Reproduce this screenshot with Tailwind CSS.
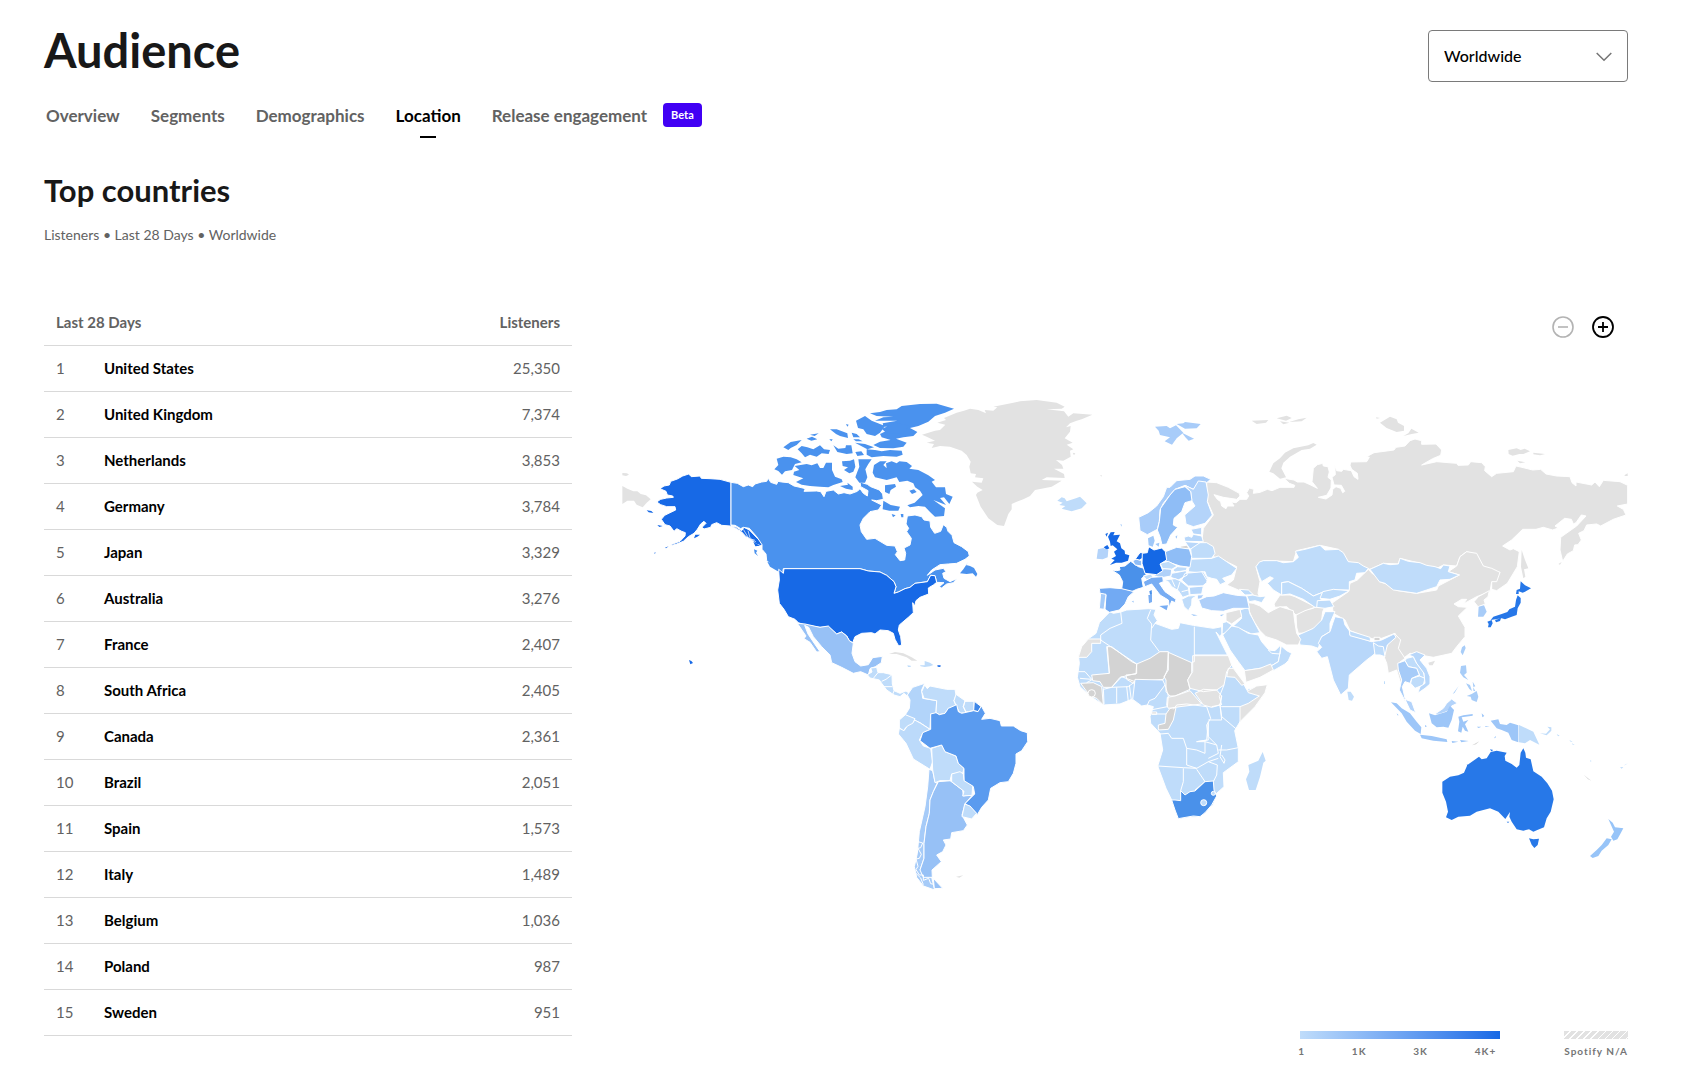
<!DOCTYPE html>
<html lang="en">
<head>
<meta charset="utf-8">
<meta name="viewport" content="width=device-width, initial-scale=1">
<title>Audience – Location</title>
<script src="https://cdn.jsdelivr.net/npm/@tailwindcss/browser@4"></script>
</head>
<body class="bg-white font-['Lato',sans-serif] text-black">
<main class="pl-11 pr-[73px] pb-5">
  <header class="flex items-start justify-between pt-6">
    <h1 class="text-[47px] leading-[52px] font-bold text-[#181818]">Audience</h1>
    <div class="relative mt-1.5 w-[200px]">
      <select aria-label="Region" class="h-[52px] w-full appearance-none rounded-[4px] border border-[#7a7a7a] bg-white px-[15px] text-[16px] font-medium text-black">
        <option>Worldwide</option>
      </select>
      <svg class="pointer-events-none absolute top-[22px] right-4 h-2.5 w-4" viewBox="0 0 16 10" fill="none" stroke="#757575" stroke-width="1.5" aria-hidden="true"><path d="M.7 1 8 8.3 15.3 1"/></svg>
    </div>
  </header>

  <nav aria-label="Audience" class="mt-[21px] flex h-6 items-start gap-[31px] pl-0.5 text-[17px] leading-[26px] font-bold text-[#626262]">
    <a href="#">Overview</a>
    <a href="#">Segments</a>
    <a href="#">Demographics</a>
    <a href="#" aria-current="page" class="relative text-black">Location<span class="absolute top-[33px] left-1/2 h-0.5 w-4 -translate-x-1/2 bg-black"></span></a>
    <div class="flex items-start gap-4">
      <a href="#">Release engagement</a>
      <span class="rounded-[4px] bg-[#4100f4] px-2 text-[11px] leading-6 text-white">Beta</span>
    </div>
  </nav>

  <h2 class="mt-[45px] text-[31px] leading-9 font-bold text-[#181818]">Top countries</h2>
  <p class="mt-[17px] text-[14px] leading-5 text-[#626262]">Listeners • Last 28 Days • Worldwide</p>

  <div class="mt-[54px] flex items-start gap-[50px]">
    <table class="w-1/3 shrink-0 border-collapse text-[15px] leading-5 text-[#626262]">
      <thead>
        <tr class="h-[46px] border-b border-[#d9d9d9]"><th colspan="2" class="pl-3 text-left font-bold">Last 28 Days</th><th class="pr-3 text-right font-bold">Listeners</th></tr>
      </thead>
      <tbody id="rows"></tbody>
    </table>

    <section class="min-w-0 flex-1" aria-label="Listener map">
      <div class="mt-[17px] flex justify-end gap-[18px] pr-3.5">
        <button type="button" disabled aria-label="Zoom out" class="text-[#b3b3b3]"><svg class="size-[22px]" viewBox="0 0 22 22" fill="none" stroke="currentColor" stroke-width="1.6"><circle cx="11" cy="11" r="10"/><path d="M6 11h10"/></svg></button>
        <button type="button" aria-label="Zoom in" class="text-black"><svg class="size-[22px]" viewBox="0 0 22 22" fill="none" stroke="currentColor" stroke-width="1.8"><circle cx="11" cy="11" r="10"/><path d="M6 11h10M11 6v10"/></svg></button>
      </div>
      <svg class="mt-[52px] block w-full" viewBox="622 390 1006 520" stroke-linejoin="round" role="img" aria-label="Listeners by country">
        <!-- Northern Asia -->
        <g transform="translate(1230 400) scale(.33333)" fill="#e2e2e2" stroke="#fff" stroke-width="3">
          <path d="M-70 246L-40 248-5 262 28 280 30 288 20 298-20 292-48 284-38 298-28 305-25 318-12 326 -8 318 12 318 4 306 18 308 30 298 50 298 56 288 50 278 58 264 72 268 70 280 90 277 112 268 126 272 150 262 192 262 194 256 178 250 162 235 192 240 202 246 222 246 240 254 262 265 246 245 250 205 262 194 278 190 280 198 294 200 298 216 294 232 304 240 303 264 290 286 265 292 288 297 306 285 308 268 318 260 332 265 338 278 344 274 334 256 312 255 306 232 316 224 314 196 320 212 335 214 340 208 364 212 372 230 384 238 382 220 365 208 360 196 362 186 410 185 418 172 410 170 432 158 492 150 498 142 525 138 540 122 555 117 575 122 575 133 618 132 635 150 632 166 608 176 575 195 620 185 680 190 684 196 715 195 722 185 755 188 766 200 764 212 785 230 800 220 850 215 858 198 876 202 908 210 932 208 948 222 980 228 1020 230 1026 248 1038 258 1038 246 1085 255 1095 246 1108 260 1120 241 1170 245 1193 256 1193 312 1162 318 1180 328 1188 345 1150 358 1112 378 1100 372 1070 375 1062 392 1046 400 1054 420 1044 434 1034 435 1030 452 1012 462 998 484 990 450 992 412 1040 378 1068 348 1054 345 1038 368 1030 372 1024 358 1004 355 975 378 985 384 968 390 940 382 918 388 878 388 845 420 818 438 840 450 850 446 868 455 862 500 832 550 800 572 785 568 785 545 810 517 790 520 760 500 740 465 710 455 690 470 680 498 640 495 615 508 570 490 510 475 505 492 460 490 420 508 355 485 325 448 270 436 200 452 190 485 100 482 78 500 90 545 84 580 92 600 60 588 25 570-10 555 10 540 20 500-20 480-50 470-70 455-85 428-80 385-50 345-70 300Z"/>
          <path stroke="none" d="M875 450L885 480 895 505 882 508 886 530 880 535 873 500ZM118 215L130 190 150 175 165 158 190 145 235 136 250 129 260 134 240 146 215 150 180 170 160 188 154 205 168 232 150 236 130 220ZM450 68L480 50 500 58 504 68 522 78 522 92 500 96 470 84ZM520 108L535 100 544 86 566 98 545 102ZM835 150L860 145 872 150 884 146 900 154 880 162 868 162 848 167 836 162ZM910 158L945 162 930 166 910 163ZM862 182L886 187 870 190ZM65 62L115 60 108 68 80 72ZM140 55L170 47 185 54 168 62ZM178 66L205 58 230 53 215 64ZM150 64L178 68 160 73ZM438 52L450 54 440 56ZM1184 225L1193 220V228H1184ZM985 492L995 486 990 494ZM322 80l12 3zM350 55l10 2z"/>
        </g>
        <g transform="translate(1250 540) scale(.33333)" fill="#e2e2e2" stroke="#fff" stroke-width="3">
          <path d="M355 88L368 102 390 112 388 125 430 138 445 152 500 160 560 150 565 138 628 105 595 95 620 78 630 50 650 35 680 40 700 78 725 85 750 97 740 125 725 125 720 155 680 170 640 192 650 178 635 178 612 192 625 200 652 202 625 228 645 262 645 290 620 320 605 340 550 352 510 345 480 340 460 355 440 325 445 300 435 280 395 295 375 298 350 292 300 272 285 240 250 220 245 190 295 155 300 130 322 120Z"/>
          <path d="M535 368L555 362 548 376 538 376Z" stroke="none"/>
          <path d="M672 185L685 170 718 152 714 170 702 180 706 192 684 200Z"/>
          <path d="M138 225L165 210 185 206 200 200 225 200 218 215 215 240 205 262 190 265 180 278 145 280 140 262Z"/>
          <path d="M72 192L90 165 120 165 135 170 185 195 200 200 165 212 138 225 110 200 75 202Z"/>
          <path d="M435 282L452 300 445 325 465 355 445 370 455 420 455 440 440 390 415 400 410 370 400 345 412 315Z"/>
          <g fill="#bfdcfa">
            <path d="M18 80L28 66 40 62 80 62 100 68 130 65 145 52 136 34 165 28 210 16 225 30 265 28 280 38 295 65 325 68 340 78 355 85 345 98 320 100 315 120 298 125 298 150 250 150 215 158 190 168 155 145 115 125 95 128 95 165 70 150 52 130 70 115 60 110 35 125 28 110Z"/>
            <path d="M95 128L115 125 155 145 190 168 215 158 225 170 205 185 228 190 210 202 195 202 160 178 120 162 95 165Z"/>
            <path d="M218 155L250 148 298 152 270 168 240 178 210 175Z"/>
            <path d="M202 182L240 180 252 200 225 205 200 202Z"/>
            <path d="M360 88L400 70 420 74 445 72 450 55 475 64 510 68 530 76 555 80 572 86 580 75 600 78 595 95 628 105 600 118 570 120 560 140 530 150 500 160 430 150 405 130 388 125Z"/>
            <path d="M145 285L190 265 215 240 225 215 255 215 240 250 240 275 215 290 205 325 185 318 150 315Z"/>
            <path fill="#b8d7fa" d="M255 230L280 235 285 255 300 275 300 285 350 300 365 305 395 300 432 282 438 292 412 315 405 345 390 345 388 325 370 345 350 360 298 405 295 445 272 465 250 420 232 350 215 355 200 335 215 322 205 310 215 290 240 275 248 250Z"/>
            <path d="M298 272L360 292 362 304 300 287ZM370 308L385 318 400 320 405 350 390 345 375 345Z"/>
            <path fill="#d3d3d3" d="M372 292h18v10h-18z"/>
            <path d="M292 455L302 455 312 470 306 482 296 480Z" stroke="none"/>
            <path d="M470 355L490 350 500 370 520 395 525 415 510 410 500 385 475 380 465 362Z"/>
            <path d="M485 415L508 408 525 415 520 435 495 445 482 430Z"/>
            <path fill="#b8d7fa" d="M475 345L500 335 525 345 510 360 530 385 540 410 540 432 525 445 503 460 510 440 525 430 522 400 500 370 490 350Z"/>
            <path fill="#a6cbf8" d="M443 370L465 362 475 380 500 385 508 405 485 415 480 430 465 425 457 440 465 475 475 485 465 482 448 450 455 420 445 390Z"/>
            <path fill="#b3d3fa" d="M465 478L485 485 497 518 480 510Z"/>
            <path fill="#b3d3fa" d="M552 524L580 505 590 490 605 477 622 490 605 498 590 515 570 522Z"/>
          </g>
          <g stroke="none" fill="#9dc6f8">
            <path d="M423 487L440 490 455 505 480 520 500 545 514 562 512 582 495 572 470 545 455 520ZM510 584L545 588 590 598 592 606 550 602 515 595ZM537 520L555 526 590 515 600 497 612 510 605 540 595 563 580 560 560 562 545 550ZM625 530L640 526 668 522 668 527 635 532 640 545 655 540 645 553 655 575 645 572 638 560 634 578 624 574 628 545ZM722 542L745 538 750 552 770 555 780 548 805 556 805 607 785 600 775 578 755 570 740 565 728 550ZM605 603l20 2-18 4zM630 600l26 3-22 4zM695 520l8 8-6 4zM440 520l6 6-4 0zM680 560l14 0-8 4zM705 558l14 2-12 1zM525 555l6 4-6 2zM732 595l5-8 0 6z"/>
            <path fill="#a8cdf8" d="M633 378L648 376 650 398 642 405 655 420 640 412 630 398ZM650 468L665 462 680 453 685 470 680 486 665 480 662 470ZM648 430l12 5 6 18-8-6zM668 425l8 14-6 2zM608 462l18-24-12 20zM636 322l8-6 3 8-9 22-6-10zM670 442l6 12-6-2z"/>
            <path fill="#a8ccf8" d="M686 200L702 196 710 215 700 230 684 230Z"/>
            <path fill="#bfdcfa" d="M807 555L850 575 868 614 840 600 825 610 807 607ZM402 424l3 0 0 8-3 0z"/>
            <path fill="#d3d3d3" d="M666 616L688 604 678 613Z"/>
            <path fill="#2677e8" d="M812 124L825 136 843 145 825 155 818 158 806 154 806 162 798 162 800 150 810 146ZM803 166L812 174 812 188 803 205 800 225 785 230 765 238 755 235 722 240 730 230 755 222 772 216 778 208 795 200 798 180ZM712 245L725 240 728 250 722 262 714 262 716 252ZM735 240L753 235 750 243 738 247Z"/>
          </g>
        </g>

        <!-- North America -->
        <g transform="translate(620 390) scale(.33333)" stroke="#fff" stroke-width="3">
          <path fill="#e2e2e2" stroke="none" d="M7 288L22 296 40 304 52 304 62 312 78 316 92 328 80 338 68 352 50 344 42 332 22 332 7 342ZM7 249L21 250 27 254 18 258 7 256Z"/>
          <path fill="#1769e6" d="M206 252L214 260 240 258 244 265 270 266 300 268 333 277V408L350 412 365 422 372 412 388 420 412 445 428 460 424 468 408 462 395 450 378 440 365 426 350 416 330 408 305 406 290 398 275 404 272 412 252 417 246 412 258 400 252 394 242 402 232 418 222 430 205 440 190 454 170 462 150 468 158 462 180 454 195 438 196 428 185 424 170 416 162 424 150 408 135 404 124 388 134 376 150 368 167 360 165 350 140 350 122 344 110 336 122 328 140 324 160 322 158 318 142 315 138 304 120 296 132 288 148 285 152 274 172 267 188 258Z"/>
          <path fill="#4a92ee" d="M333 277L352 280 370 290 385 285 398 290 405 282 425 276 440 274 445 265 452 277 470 283 474 274 485 276 505 278 522 288 540 292 556 296 552 304 590 303 602 305 612 320 618 304 640 300 655 312 672 308 690 312 712 304 720 296 730 310 742 318 744 302 722 290 720 276 742 283 752 290 778 300 788 312 790 328 770 332 755 330 785 345 775 360 750 365 730 385 720 405 724 425 740 448 765 445 800 466 825 468 832 485 826 494 840 512 854 510 857 490 852 474 870 465 874 445 860 425 866 415 858 402 862 378 885 375 905 380 912 390 930 393 932 412 944 430 962 424 970 404 980 412 984 424 996 436 1002 458 1025 470 1045 485 1048 498 1035 508 1010 520 985 522 960 524 935 540 922 556 945 540 970 535 978 545 968 550 972 565 990 575 1010 566 1000 578 980 582 965 594 958 590 972 578 950 577 945 557 932 556 922 575 900 578 885 580 870 592 855 596 835 606 822 610 828 590 822 575 800 556 780 546 745 543 720 536H490L488 548 478 538 455 525 440 512 438 492 426 478 426 464 410 440 388 415 370 412 362 416 345 406 333 405Z"/>
          <g fill="#4a92ee" stroke="none">
            <path d="M1046 514L1038 525 1050 528 1062 534 1072 552 1068 560 1058 550 1040 552 1020 550 1030 538ZM442 515L462 522 484 540 490 550 472 543 450 530ZM402 478L412 482 408 488 414 498 404 490ZM470 206L490 200 512 202 530 208 545 217 525 222 516 240 495 244 486 254 475 243 463 238 475 225ZM524 228L560 222 575 226 592 220 600 234 610 234 618 218 636 218 636 240 645 260 665 268 668 276 640 285 625 292 600 290 570 288 545 284 528 276 550 265 520 255 522 245 538 240ZM666 214L690 212 702 208 706 230 700 245 688 250 672 240 684 232 668 228ZM660 288L684 284 682 278 698 290 698 300 678 296ZM715 208L755 208 745 222 736 238 742 262 735 278 718 278 706 262 712 245 718 230ZM762 225L780 214 800 214 790 225 800 235 798 220 815 214 830 220 838 214 860 216 876 228 868 236 895 240 925 256 945 270 935 275 948 292 975 292 978 312 998 320 988 342 972 322 960 324 978 345 940 330 975 355 972 378 945 380 930 366 915 350 895 348 870 352 862 346 884 338 908 315 900 302 885 292 880 280 862 272 838 276 830 262 800 270 765 262 758 248ZM790 332L812 345 840 350 835 362 808 362 788 358ZM868 302l14-4 8 8-14 6zM795 286L825 282 828 290 812 300 808 312 795 306ZM815 372l12 4-8 6zM842 372l8 0 0 10-6 0z"/>
            <path d="M750 70L780 66 800 60 830 58 845 48 900 42 950 41 1002 56 975 68 945 78 925 95 895 108 870 114 892 126 880 138 850 142 828 146 860 158 850 170 820 175 780 174 760 165 780 155 812 150 785 142 780 132 800 122 825 116 790 108 788 100 832 92 765 92 790 82 820 80 770 78ZM708 92L735 78 755 92 795 108 780 128 765 138 740 132 730 118 714 114ZM740 178L765 180 785 184 810 180 845 182 848 194 830 200 790 198 755 202 740 194ZM705 158L735 162 762 172 742 178ZM630 118L650 118 682 130 684 144 660 138 648 132ZM695 128L710 132 720 142 700 142ZM490 172L512 156 545 150 530 165 512 174 505 180ZM570 134L596 130 584 138ZM560 146L576 140 592 148 574 152ZM533 178L545 168 562 172 580 178 600 166 612 178 630 180 626 192 605 190 590 200 570 194 555 202 545 190ZM640 166L655 176 676 174 678 166 694 166 698 190 680 192 652 186ZM706 186L724 184 732 195 712 198ZM700 148l16 0 12 6-20 0zM678 102l8 2-4 6zM628 148l10 0-4 6z"/>
            <path d="M785 116L830 98 868 108 850 130 800 130Z"/>
          </g>
          <path fill="#1769e6" d="M476 538L490 550 492 536H720L745 543 780 546 800 556 822 575 828 590 822 610 835 606 855 596 870 592 885 580 900 578 922 575 932 556 945 557 950 577 940 585 925 594 926 612 900 622 888 632 884 648 878 638 880 668 865 682 838 705 835 720 842 740 845 765 836 768 825 748 820 730 805 722 780 720 765 732 755 728 725 730 705 740 698 758 688 752 680 738 665 726 650 732 625 710 600 712 555 705 535 698 525 688 505 680 492 658 478 640 473 600 478 570Z"/>
          <path fill="#1769e6" stroke="none" d="M80 361L94 363 100 369 86 367ZM112 405L128 408 118 411ZM226 434L240 434 232 440 222 445ZM135 473L146 469 138 475ZM102 489l5-2-2 4zM207 810L214 813 219 819 211 823ZM400 455l20 12-14 2z"/>
          <path fill="none" stroke-width="2" d="M370 418l18 30 16 2M384 422l6 22 18 12"/>
          <path fill="#97c1f6" d="M532 700L555 702 600 712 625 708 650 732 665 726 680 738 688 752 700 760 696 790 705 815 722 828 745 824 758 803 787 799 784 818 766 830 750 836 745 855 722 845 700 850 665 832 635 818 630 795 605 770 580 740 566 712 554 706 564 732 580 756 600 785 590 786 570 757 552 746 558 738Z"/>
        </g>

        <!-- Greenland, Iceland -->
        <g transform="translate(860 390) scale(.33333)">
          <path fill="#e2e2e2" d="M186 134L225 122 240 120 256 104 232 98 258 90 252 84 290 68 312 62 330 56 355 60 378 70 374 60 400 62 412 52 400 50 460 38 480 34 530 30 590 38 614 50 605 56 560 58 612 64 625 80 640 70 697 74 665 88 650 92 630 100 618 112 632 108 630 125 614 145 638 158 620 164 640 178 630 182 632 200 610 212 588 210 606 225 610 236 582 236 612 252 614 264 560 262 545 270 605 272 575 290 525 300 510 318 490 328 470 335 455 342 455 358 445 372 432 408 412 405 385 385 362 350 348 315 352 308 368 300 352 290 336 275 365 278 370 265 345 262 348 252 332 250 328 230 332 215 320 195 305 182 270 170 240 168 215 174 222 162 200 158 225 152 200 140Z"/>
          <path fill="#bfdcfa" d="M592 332L605 322 614 325 620 334 650 324 660 320 668 328 680 340 665 355 635 364 605 356 616 348 598 345 608 338Z"/>
          <path fill="#e2e2e2" d="M638 188l8 2-4 6zM720 256l6 0-2 4z"/>
        </g>

        <!-- South and Central America -->
        <g transform="translate(880 640) scale(.33333)" fill="#bfdcfa" stroke="#fff" stroke-width="3">
          <path d="M-38 104L-24 96-28 84-10 82-6 98 10 98 36 104 37 132 42 152 60 160 78 153 88 160 86 172 72 160 60 170 42 165 20 150 5 130-2 120-30 114Z"/>
          <path fill="none" d="M-6 98L-20 115M36 104L18 118 5 124M10 140H37M42 152l-4 12"/>
          <path stroke="none" fill="#e2e2e2" d="M27 42L45 36 70 40 95 52 112 62 95 62 80 52 50 42ZM228 710L250 706 238 713ZM422 736l10 4z"/>
          <path stroke="none" d="M120 76L134 76 134 63 150 68 160 75 150 79 134 81 122 79ZM82 76l10 1 0 4-8 0zM78 20l4 2z"/>
          <path stroke="none" fill="#1769e6" d="M172 76l10 0-1 5-8-1z"/>
          <path fill="#b2d4fa" d="M134 130L125 150 128 175 170 182 168 220 152 222 150 268 120 248 100 240 76 224 88 205 90 180 82 165 98 142Z"/>
          <path d="M134 135L142 146 150 138 200 148 225 148 228 165 222 182 228 198 205 205 195 220 178 224 168 218 170 182 132 175 125 155Z"/>
          <path d="M228 163L255 182 250 200 258 218 240 220 232 205 222 182ZM255 184L282 184V212L258 216 250 200Z"/>
          <path fill="#4088e8" d="M283 184L304 200 294 215 281 212Z"/>
          <path d="M76 224L105 236 98 252 75 265 72 275 58 262 58 240Z"/>
          <path fill="#bcdafa" d="M58 265L72 272 82 258 98 250 104 240 122 250 150 268 128 280 118 300 130 318 152 325 158 365 150 388 100 357 78 310 55 282Z"/>
          <path fill="#a6cbf8" d="M147 388L158 392 165 425 172 428 160 455 150 480 148 520 138 560 132 610 132 655 120 690 155 712 164 750 130 738 110 712 103 680 112 640 118 575 135 500 143 440Z"/>
          <path fill="#97c1f6" d="M175 425L210 422 248 450 250 468 280 462 256 490 246 525 262 555 250 572 215 578 212 597 190 600 198 615 188 635 170 645 184 665 156 690 157 712 130 712 120 690 132 655 132 610 138 560 148 520 150 480 160 455ZM160 715L188 745 163 746Z"/>
          <path d="M155 325L185 315 195 335 228 348 235 370 252 385 248 400 215 402 210 422 180 422 165 428 158 390Z"/>
          <path fill="#5a9bef" d="M152 222L168 218 178 224 195 220 205 205 230 194 235 215 245 220 281 212 294 215 304 198 316 220 305 238 330 235 360 242 364 258 400 258 422 272 442 278 443 305 425 332 408 342 408 370 400 400 385 425 360 428 332 445 325 480 305 502 292 524 256 490 284 462 280 440 252 425 252 385 235 370 228 348 195 335 185 315 150 325 120 302 128 278 152 268Z"/>
          <path d="M215 402L240 395 250 402 252 422 278 438 276 466 248 468 252 454 215 425ZM254 492L270 498 290 520 275 537 246 530Z"/>
          <path fill="none" d="M114 605l14 4-6 14-8 2 10 18-6 12-10 2 6 22-6 10 10 16 12 0 0 16 16-6 6 16 10 2M108 700l14 14 8 20"/>
        </g>

        <!-- Africa and the Middle East -->
        <g transform="translate(1060 590) scale(.33333)" fill="#bfdcfa" stroke="#fff" stroke-width="3">
          <path d="M150 65L160 70 182 66 200 60 265 56 288 58 282 75 292 92 285 100 335 118 355 115 360 98 400 106 460 115 485 110 486 130 480 140 468 126 500 190 508 208 520 235 550 280 560 298 622 284 615 308 585 350 540 395 524 422 535 475 535 515 490 548 492 590 470 610 460 645 420 680 355 686 335 630 318 595 293 528 308 480 300 430 272 400 270 380 280 350 262 345 245 348 215 328 180 342 130 345 90 318 60 290 52 262 58 220 55 195 80 150 108 130 118 98Z"/>
          <path fill="#e2e2e2" d="M85 147H122V160H95V185L80 202H55L65 170Z"/>
          <path fill="#d3d3d3" d="M140 170H155L215 215 230 222V250L180 262 155 292H130L120 275 98 272 95 255 148 250ZM230 222L270 205 300 185 325 185 322 240 310 268 265 272 225 272 220 280 200 268 198 255 228 252ZM325 187L395 218 395 248 383 270 390 298 345 318 330 318 318 305V270L312 260 325 240ZM62 280L100 278 125 290 130 345 110 325 90 318ZM318 372L330 355 348 352 340 390 325 418 295 420 295 405 315 400Z"/>
          <circle fill="#d3d3d3" cx="95" cy="310" r="11"/>
          <path fill="#e2e2e2" d="M398 197H505L515 225 500 245 492 285 470 300 430 305 390 295 383 270 398 245ZM405 310L430 298 470 300 485 318 480 345 455 352 430 345ZM322 322L345 318 390 302 425 342 360 350 325 355 320 345ZM505 235H520L555 282 545 286 525 262 500 260ZM556 290L565 302 590 288 622 284 615 308 585 350 540 395V350L565 340 598 318 565 308Z"/>
          <path fill="#d3d3d3" d="M275 366h15v7h-15z"/>
          <path fill="#b8d7fa" d="M225 268L308 270 315 285 300 305 285 325 268 332 262 345 245 348 218 328Z"/>
          <path fill="none" d="M182 66L186 100 150 115 122 135V150L230 222M272 60L262 85 275 102 272 150 298 185M285 100L275 115M403 110V215L395 217M403 195H505M148 250L142 170M55 245L75 245 95 268 60 265M80 278L95 270M155 292L185 260 225 275 205 290 155 292 130 298M170 292V340M200 290L205 335M208 285L214 330M130 295L132 342M315 285L325 318 322 350 272 360M275 372H318M340 358L350 345 380 342 440 350 452 385 440 405 445 450 410 455M445 395L440 450 410 455 435 455V490L410 480 380 475 370 445 335 445 325 430 300 432M455 350L480 345 485 380 530 418M445 390H485L480 345M485 318L480 345 485 350 510 350 540 350M492 285L478 320 485 345M435 455L470 465 475 490 445 505M475 480H500L535 473M445 400L445 440 470 465M380 475V525L410 535 445 515 475 505M293 528L370 533 410 535M370 535V575L362 602V630M410 538L435 575 405 600M445 515L472 525 470 555 460 575M485 465L480 500 492 520 495 510 485 495"/>
          <path fill="#4a91ea" d="M335 630L345 630 362 632V602L375 615 390 605 405 603 435 575 460 573 462 600 470 618 455 645 435 668 420 680 400 678 355 686 345 660Z"/>
          <circle cx="431" cy="638" r="9"/><circle cx="460" cy="610" r="6"/>
          <path stroke="none" d="M608 486L617 512 610 518 600 560 587 600 567 600 558 568 568 545 565 525 595 512Z"/>
          <path fill="#e2e2e2" d="M565 38L580 40 600 48 625 68 640 60 660 50 700 62 705 100 710 130 722 148 715 165 680 165 650 150 618 140 600 122 582 95 568 65Z"/>
          <path d="M540 60L565 52 570 72 580 90 600 128 575 132 520 108 545 85Z"/>
          <path fill="#e2e2e2" d="M498 68L540 58 545 80 515 102 498 92Z"/>
          <path d="M488 98L500 95 515 105 500 128 486 132Z"/>
          <path d="M488 135L515 108 535 112 565 130 595 135 605 155 625 178 660 190 655 215 630 230 555 242 535 215 510 180Z"/>
          <path d="M625 180L645 182 662 165 660 192 635 190ZM664 168L680 182 695 190 685 212 675 222 640 242 630 230 655 215Z"/>
          <path fill="#e2e2e2" d="M553 242L600 235 632 222 640 240 600 262 558 277Z"/>
        </g>

        <!-- Europe -->
        <g transform="translate(1060 400) scale(.33333)" fill="#bfdcfa" stroke="#fff" stroke-width="3">
          <g stroke="none">
            <path fill="#1568e5" d="M152 397L164 396 160 406 180 404 170 424 180 430 184 445 194 452 195 462 208 466 204 482 185 488 168 488 150 495 164 480 154 476 168 468 162 455 172 448 158 436 152 438 150 425 144 410ZM131 442L142 435 148 445 140 449ZM136 402l8-4-4 12z"/>
            <path fill="#b3d3fa" d="M114 448L130 444 145 450 143 472 128 478 110 476Z"/>
            <path fill="#a8ccf9" d="M285 80L320 78 330 85 348 76 370 98 350 115 336 134 314 124 330 112 300 105 296 92ZM350 72L370 70 375 66 422 72 410 85 375 86ZM366 98L402 116 386 122 376 112ZM181 372l5 2-2 6zM464 70l9 1z"/>
            <path fill="#a0c8f8" d="M264 415L280 407 284 422 278 440 266 436ZM286 432L298 428 296 440ZM346 410l6-4-2 10z"/>
          </g>
          <path fill="#a8ccf9" d="M236 352L265 338 290 318 310 290 320 262 330 262 350 242 390 238 405 228 430 228 452 238 440 248 410 255 400 268 375 256 345 268 330 285 310 310 300 330 298 365 292 388 262 404 240 392Z"/>
          <path fill="#b4d4fa" d="M375 256L400 268 415 243 438 246 445 285 442 305 457 345 435 370 400 380 378 372 374 345 405 318 395 302 392 275Z"/>
          <path fill="#8fbdf6" d="M302 325L330 285 345 268 375 260 392 275 396 302 375 308 365 335 342 355 340 375 353 382 332 405 320 432 306 434 300 410 292 390 298 365Z"/>
          <path fill="#b8d7fa" d="M393 388L425 382V405L400 402ZM372 412L385 408 395 412 400 403 425 408 430 425 375 424ZM375 425L420 428 412 448 390 447Z"/>
          <path fill="#d3d3d3" stroke="none" d="M362 440l18-3 5 6-20 2z"/>
          <path d="M392 447L420 428 440 428 460 440 465 460 455 475 395 475ZM390 478L455 475 475 468 500 485 530 505 515 525 488 535 498 546 480 554 470 538 455 535 440 530 435 515 415 518 385 515Z"/>
          <path fill="#4a91ea" d="M155 510L170 512 180 510 178 500 195 498 212 484 235 500 262 508 258 525 245 535 250 562 230 568 215 575 185 568 188 545 178 525Z"/>
          <path fill="#8fbdf6" d="M218 482L230 477 245 482 245 498 225 495Z"/>
          <path fill="#1568e5" d="M226 477L240 458 254 458 248 475 238 480Z"/>
          <path fill="#8fbdf6" d="M316 455L350 442 388 447 395 470 390 502 360 498 318 484Z"/>
          <path fill="#72aaf3" d="M118 565L150 563 185 566 222 575 205 590 195 612 178 630 148 637 135 628 138 585 120 580Z"/>
          <path fill="#a5cbf8" d="M122 580L138 583 132 628 118 626Z"/>
          <path d="M300 490L325 484 352 498 335 508 308 506ZM338 510L352 500 382 502 378 512 345 516ZM250 528L272 522 282 534 262 542Z"/>
          <path fill="#b0d1f9" d="M278 525L305 515 310 506 335 508 333 528 300 534Z"/>
          <path fill="#b8d7fa" d="M335 520L378 512 382 525 355 540 332 532ZM375 520L430 515 442 535 440 548 428 558 385 558 365 540ZM388 562L430 558 425 582 390 584Z"/>
          <path d="M312 540L345 536 360 542 385 562 388 585 368 592 355 572 335 560 325 545ZM365 598L385 588 412 586 396 596 395 615 385 632 372 620Z"/>
          <path fill="none" d="M335 538L345 560M360 545L352 570M365 575L385 570M425 515L440 540"/>
          <path fill="#78adf3" d="M250 545L275 532 308 530 310 545 298 550 315 575 348 598 345 608 335 603 328 622 325 600 300 585 285 565 275 552 255 560Z"/>
          <path fill="#1568e5" d="M247 460L262 458 266 440 282 450 305 444 316 455 320 480 300 492 308 512 290 524 255 520 246 490Z"/>
          <path fill="#78adf3" stroke="none" d="M298 618L324 616 320 631ZM265 585H276V606L267 610Z"/>
          <path fill="#4a91ea" stroke="none" d="M268 574l7-4 1 14-6 0z"/>
          <path stroke="none" fill="#a5cbf8" d="M393 642l20 4-12 2zM215 604l6-2 0 6zM480 645l12-2-8 6z"/>
          <path fill="#aecff9" d="M416 600L440 590 462 588 490 578 530 586 560 588 568 625 520 625 490 634 455 632 425 624ZM412 585L432 584 424 596 412 598Z"/>
          <path d="M538 568L565 570 580 584 555 585ZM560 588L578 585 600 590 618 588 605 608 585 602 568 605Z"/>
        </g>

        <!-- Oceania -->
        <g transform="translate(1380 630) scale(.33333)">
          <path fill="#2778e8" d="M187 455L210 440 235 436 252 428 262 405 280 392 297 380 305 388 320 385 332 366 350 362 380 368 374 378 376 392 395 402 410 413 418 405 422 368 430 355 436 368 438 383 452 388 460 424 485 440 502 460 516 482 521 508 512 545 500 565 492 592 472 600 460 605 447 598 430 602 410 598 395 575 388 560 390 546 376 567 355 545 330 535 290 545 270 557 235 560 215 570 198 562 204 545 198 515 187 488ZM447 625L460 628 477 626 473 645 463 654 455 644ZM260 404l12-2-6 12zM380 575l8 0-4 4zM330 358l10 2-6 4z"/>
          <path fill="#97c4f8" d="M685 567L698 578 705 592 730 595 722 610 712 628 700 632 693 620 702 605ZM680 625L695 628 685 645 665 662 655 678 638 684 630 678 650 660 665 645Z"/>
          <path fill="#bfdcfa" d="M480 310L498 311 510 298 502 290 514 292 514 302 500 316ZM530 312l9 5-5 2zM568 330l10 5-6 0zM576 340l8 4-6 0zM720 412l10-1-5 5zM732 406l12-6-8 5zM630 391l5 2-4 2z"/>
          <path fill="#d9d9d9" d="M611 434L634 452 624 448Z"/>
        </g>
      </svg>
      <div class="mt-[121px] flex justify-end gap-16 text-[10px] leading-3 font-bold tracking-widest text-[#757575]">
        <div class="w-[200px]">
          <div class="h-2 bg-linear-to-r from-[#bfdcfa] to-[#1568e5]"></div>
          <div class="mt-1.5 -ml-0.5 flex justify-between pr-1"><span>1</span><span>1K</span><span>3K</span><span>4K+</span></div>
        </div>
        <div>
          <div class="h-2 bg-[repeating-linear-gradient(135deg,#e2e2e2_0,#e2e2e2_4px,#fff_4px,#fff_5px)]"></div>
          <div class="mt-1.5">Spotify N/A</div>
        </div>
      </div>
    </section>
  </div>
</main>
<script>
const countries = [["United States","25,350"],["United Kingdom","7,374"],["Netherlands","3,853"],["Germany","3,784"],["Japan","3,329"],["Australia","3,276"],["France","2,407"],["South Africa","2,405"],["Canada","2,361"],["Brazil","2,051"],["Spain","1,573"],["Italy","1,489"],["Belgium","1,036"],["Poland","987"],["Sweden","951"]];
document.getElementById('rows').innerHTML = countries.map(([name, n], i) =>
  `<tr class="h-[46px] border-b border-[#d9d9d9]"><td class="w-[60px] pl-3">${i + 1}</td><td class="font-bold text-black">${name}</td><td class="pr-3 text-right">${n}</td></tr>`).join('');
</script>
</body>
</html>
